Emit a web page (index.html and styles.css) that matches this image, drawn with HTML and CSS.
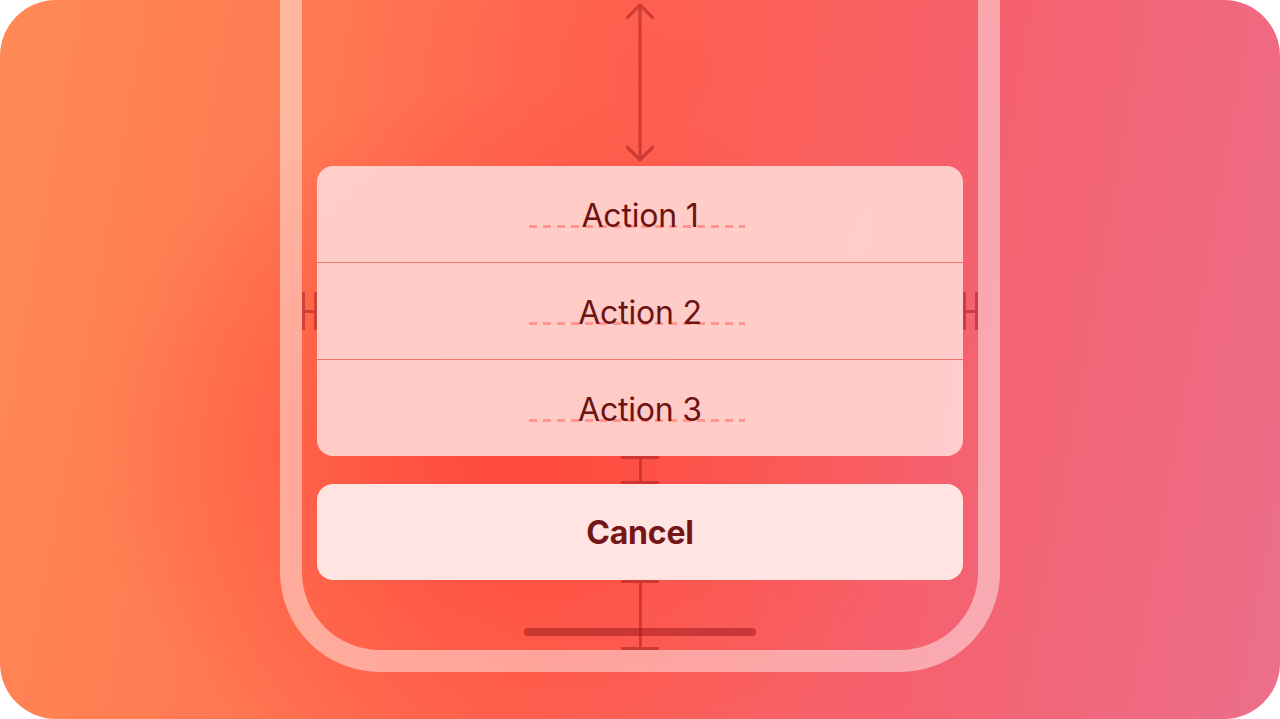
FILE: index.html
```html
<!DOCTYPE html>
<html lang="en">
<head>
<meta charset="utf-8">
<title>Action Sheet</title>
<link rel="stylesheet" href="styles.css">
</head>
<body>
<div class="card">
  <div class="phone">
    <div class="top-gap">
      <svg class="arrow" width="40" height="166" viewBox="0 0 40 166">
        <path d="M20 5 V160 M7.5 17.5 L20 5 L32.5 17.5 M7.5 147.5 L20 160 L32.5 147.5" fill="none" stroke="rgba(150,20,25,0.45)" stroke-width="3.2" stroke-linecap="round" stroke-linejoin="round"/>
      </svg>
    </div>
    <div class="group-row">
      <div class="h-mark"></div>
      <div class="group">
        <div class="action"><span class="label">Action 1</span></div>
        <div class="action"><span class="label">Action 2</span></div>
        <div class="action"><span class="label">Action 3</span></div>
      </div>
      <div class="h-mark"></div>
    </div>
    <div class="gap-row"><div class="ibeam"></div></div>
    <div class="cancel-row"><div class="cancel">Cancel</div></div>
    <div class="bottom-row">
      <div class="ibeam"></div>
      <div class="home"></div>
    </div>
  </div>
</div>
</body>
</html>
```

FILE: styles.css
```css
html, body {
  margin: 0;
  padding: 0;
  background: #ffffff;
}

.card {
  width: 1280px;
  height: 719px;
  border-radius: 56px;
  overflow: hidden;
  display: flex;
  justify-content: center;
  font-family: Inter, "Liberation Sans", sans-serif;
  background:
    radial-gradient(ellipse 420px 360px at 40% 62%, rgba(255, 62, 52, 0.75), rgba(255, 62, 52, 0) 100%),
    radial-gradient(ellipse 300px 300px at 50% 10%, rgba(255, 80, 70, 0.35), rgba(255, 80, 70, 0) 100%),
    linear-gradient(100deg, #ff8a56 0%, #ff7a52 22%, #ff6652 45%, #f6606c 70%, #ec6f8a 100%);
}

.phone {
  box-sizing: border-box;
  width: 720px;
  height: 772px;
  margin-top: -100px;
  border: 22px solid rgba(255, 255, 255, 0.45);
  border-radius: 0 0 100px 100px;
  padding-top: 78px;
  display: flex;
  flex-direction: column;
}

.top-gap {
  height: 166px;
  display: flex;
  justify-content: center;
}

.arrow {
  display: block;
}

.group-row {
  display: flex;
  align-items: center;
  height: 290px;
}

.h-mark {
  box-sizing: border-box;
  width: 15px;
  height: 38px;
  border-left: 3px solid rgba(150, 20, 25, 0.45);
  border-right: 3px solid rgba(150, 20, 25, 0.45);
  display: flex;
  align-items: center;
}

.h-mark::before {
  content: "";
  display: block;
  width: 100%;
  height: 3px;
  background: rgba(150, 20, 25, 0.45);
}

.group {
  flex: 1;
  height: 290px;
  border-radius: 16px;
  background: rgba(255, 214, 210, 0.92);
  overflow: hidden;
  display: flex;
  flex-direction: column;
}

.action {
  position: relative;
  flex: 1;
  display: flex;
  align-items: center;
  justify-content: center;
  font-size: 32px;
  color: #6e1212;
  letter-spacing: -0.2px;
}

.action + .action {
  border-top: 1px solid #f2746c;
}

.action::before {
  content: "";
  position: absolute;
  left: 212px;
  top: 59px;
  width: 216px;
  height: 3px;
  background: repeating-linear-gradient(to right, #ff958c 0 8px, transparent 8px 14px);
}

.label {
  position: relative;
  margin-top: 2px;
}

.gap-row {
  height: 28px;
  display: flex;
  justify-content: center;
}

.ibeam {
  box-sizing: border-box;
  width: 38px;
  height: 100%;
  border-top: 3px solid rgba(150, 20, 25, 0.45);
  border-bottom: 3px solid rgba(150, 20, 25, 0.45);
  display: flex;
  justify-content: center;
}

.ibeam::before {
  content: "";
  display: block;
  width: 3px;
  height: 100%;
  background: rgba(150, 20, 25, 0.45);
}

.cancel-row {
  height: 96px;
  padding: 0 15px;
  display: flex;
}

.cancel {
  flex: 1;
  border-radius: 16px;
  background: #ffe4e2;
  display: flex;
  align-items: center;
  justify-content: center;
  font-size: 32px;
  font-weight: 700;
  color: #761616;
  letter-spacing: -0.2px;
}

.bottom-row {
  position: relative;
  height: 70px;
  display: flex;
  justify-content: center;
}

.home {
  position: absolute;
  left: 222px;
  top: 48px;
  width: 232px;
  height: 8px;
  border-radius: 4px;
  background: rgba(150, 20, 25, 0.5);
}
```
